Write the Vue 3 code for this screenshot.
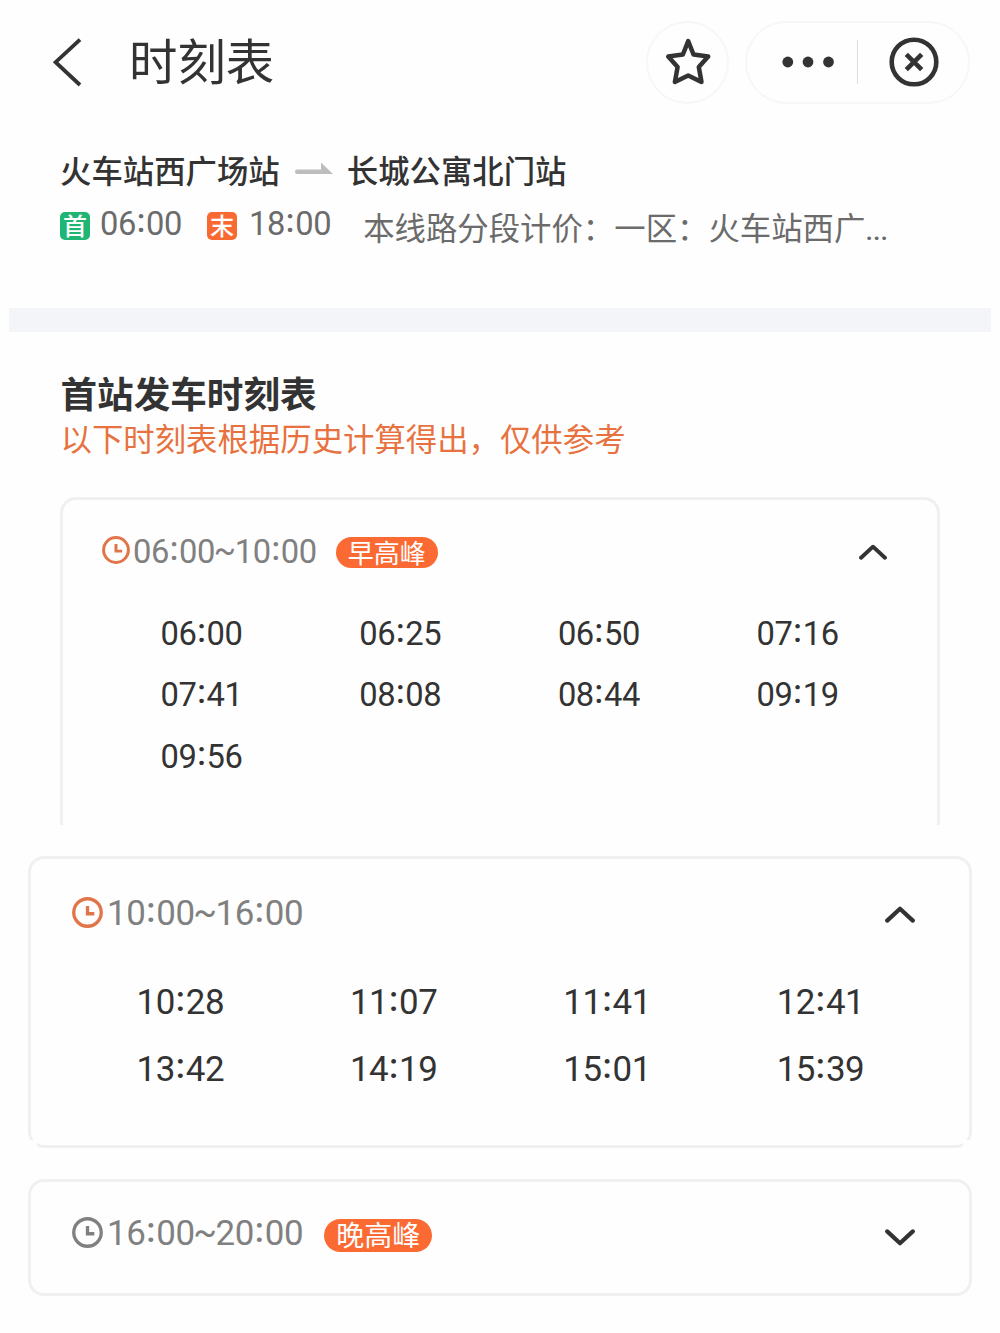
<script setup>
import { h } from 'vue'

const first = '06:00'
const last = '18:00'

const periods = [
  {
    range: '06:00~10:00',
    tag: '早高峰',
    variant: 'inset',
    open: true,
    times: ['06:00', '06:25', '06:50', '07:16', '07:41', '08:08', '08:44', '09:19', '09:56'],
  },
  {
    range: '10:00~16:00',
    tag: '',
    variant: 'wide',
    open: true,
    times: ['10:28', '11:07', '11:41', '12:41', '13:42', '14:19', '15:01', '15:39'],
  },
  { range: '16:00~20:00', tag: '晚高峰', variant: 'closed', open: false, times: [] },
]

// Splits a time string so that its separators can be centred on the digits.
const ClockText = (props) =>
  h(
    'span',
    { class: 'num' },
    props.value
      .split(/([:~])/)
      .map((part) =>
        part === ':' ? h('i', { class: 'colon' }, part) : part === '~' ? h('i', { class: 'tilde' }, part) : part
      )
  )
ClockText.props = ['value']
</script>

<template>
  <main class="page">
    <header class="bar">
      <svg class="back" width="34" height="50" viewBox="0 0 34 50">
        <path d="M30 2.6 5.6 25.2 30 48" />
      </svg>
      <h1>时刻表</h1>
      <div class="round">
        <svg width="50" height="50" viewBox="0 0 50 50">
          <path d="M25.2 4.2 30.5 17.5 45.2 19.6 35.8 30 38.5 45 25.2 38.5 11.9 45 14.6 30 5.2 19.6 19.9 17.5Z" />
        </svg>
      </div>
      <div class="capsule">
        <svg class="dots" width="54" height="12" viewBox="0 0 54 12">
          <circle cx="6.8" cy="6" r="5.4" />
          <circle cx="27" cy="6" r="5.4" />
          <circle cx="47.5" cy="6" r="5.4" />
        </svg>
        <span class="split"></span>
        <svg class="close" width="50" height="50" viewBox="0 0 50 50">
          <circle cx="25" cy="25" r="22.3" />
          <path d="m17.3 17.3 15.4 15.4M32.7 17.3 17.3 32.7" />
        </svg>
      </div>
    </header>

    <section class="route">
      <div class="stations">
        <span>火车站西广场站</span>
        <svg width="38" height="14" viewBox="0 0 38 14">
          <path d="M2 7.5H26V.5L38 12H2Q0 12 0 9.8T2 7.5Z" />
        </svg>
        <span>长城公寓北门站</span>
      </div>
      <div class="service">
        <b class="mark green">首</b>
        <ClockText :value="first" />
        <b class="mark orange">末</b>
        <ClockText :value="last" />
        <p>本线路分段计价：一区：火车站西广<span class="more">...</span></p>
      </div>
    </section>

    <div class="band"></div>

    <section class="heading">
      <h2>首站发车时刻表</h2>
      <p>以下时刻表根据历史计算得出，仅供参考</p>
    </section>

    <article v-for="p in periods" :key="p.range" class="card" :class="p.variant">
      <div class="head">
        <svg class="clock" viewBox="0 0 30 30">
          <circle cx="15" cy="15" r="13.3" />
          <path d="M15 8.6V16.2H21.6" />
        </svg>
        <ClockText :value="p.range" />
        <span v-if="p.tag" class="tag">{{ p.tag }}</span>
        <svg class="chevron" :class="{ down: !p.open }" viewBox="0 0 30 17">
          <path d="M2.2 14.6 15 2.8 27.8 14.6" />
        </svg>
      </div>
      <div v-if="p.open" class="times">
        <ClockText v-for="t in p.times" :key="t" :value="t" />
      </div>
    </article>
  </main>
</template>

<style>
body {
  background: #fefefe;
}
</style>

<style scoped>
.page {
  width: 1000px;
  height: 1333px;
  overflow: hidden;
  background: #fefefe;
  color: #333;
  font-family: 'Noto Sans CJK SC', sans-serif;
}
h1,
h2,
p {
  margin: 0;
  font-weight: 400;
  white-space: nowrap;
}
svg {
  display: block;
  flex: none;
  fill: none;
  stroke: #333;
}

.bar {
  display: flex;
  align-items: center;
  height: 125px;
  box-sizing: border-box;
  padding: 0 30px 2px 50px;
}
.back {
  stroke-width: 3.8;
}
h1 {
  margin: -6px auto 0 45px;
  font-size: 48.4px;
  line-height: 60px;
}
.round,
.capsule {
  box-sizing: border-box;
  height: 83px;
  border: 2px solid #f7f7f7;
  border-radius: 42px;
  display: flex;
  align-items: center;
}
.round {
  width: 83px;
  justify-content: center;
  margin-right: 16px;
}
.capsule,
.round {
  margin-top: 1px;
}
.round svg {
  stroke-width: 4.5;
  stroke-linejoin: round;
}
.capsule {
  width: 225px;
  padding-left: 34px;
}
.dots {
  fill: #333;
  stroke: none;
}
.split {
  width: 1px;
  height: 44px;
  margin: 0 31px 0 22px;
  background: #dcdcdc;
}
.close {
  margin-top: -1px;
  stroke-width: 4.6;
}

.route {
  height: 183px;
  box-sizing: border-box;
  padding: 24px 0 0 60px;
}
.stations {
  display: flex;
  align-items: center;
  height: 41px;
  font-size: 31.4px;
  line-height: 41px;
  font-weight: 500;
}
.stations svg {
  margin: -2px 14px 0 15px;
  fill: #bdbdbd;
  stroke: none;
}
.service {
  display: flex;
  height: 68px;
  align-items: center;
  color: #6b6b6b;
}
.service .num {
  margin: 0 0 1px 1px;
  font-size: 32.7px;
}
.mark {
  width: 30px;
  height: 28px;
  margin: 3px 9px 0 0;
  border-radius: 5px;
  color: #fff;
  font-size: 24px;
  line-height: 25px;
  font-weight: 500;
  text-align: center;
}
.green {
  background: #1fb574;
}
.orange {
  margin-left: 25px;
  margin-right: 11px;
  background: #f96a33;
}
.service p {
  margin: 9px 0 0 32px;
  font-size: 31.4px;
  line-height: 42px;
}
.more {
  font-family: Roboto, sans-serif;
  font-size: 27px;
  font-weight: 500;
}

.band {
  height: 24px;
  margin: 0 9px;
  background: #f4f5f9;
}

.heading {
  height: 165px;
  box-sizing: border-box;
  padding: 38px 0 0 60.5px;
}
h2 {
  font-size: 36.6px;
  line-height: 46px;
  font-weight: 700;
}
.heading p {
  margin-top: -1px;
  color: #e8723f;
  font-size: 31.4px;
  line-height: 46px;
}

.num {
  font-family: Roboto, sans-serif;
  line-height: 40px;
  letter-spacing: -0.012em;
  white-space: nowrap;
}
.num :deep(i) {
  display: inline-block;
  font-style: normal;
  letter-spacing: 0;
  line-height: 1;
  text-align: center;
}
.num :deep(.colon) {
  width: 0.31em;
  font-weight: 500;
  vertical-align: 0.085em;
}
.num :deep(.tilde) {
  width: 0.6em;
  text-indent: -0.04em;
  vertical-align: 0.03em;
}

.card {
  position: relative;
  box-sizing: border-box;
  margin: 0 28px 31px;
  border: 3px solid #f0f0f0;
  border-radius: 16px;
  font-size: 34.9px;
}
.inset {
  height: 328px;
  margin: 0 60px 31px;
  border-bottom: 0;
  border-radius: 16px 16px 0 0;
  font-size: 32.7px;
}
.wide {
  height: 292px;
}
.wide::before,
.wide::after {
  content: '';
  position: absolute;
  bottom: -3px;
  width: 9px;
  height: 8px;
  background: #fefefe;
}
.wide::before {
  left: -3px;
}
.wide::after {
  right: -3px;
}
.closed {
  height: 117px;
}

.head {
  display: flex;
  align-items: center;
  height: 110px;
  padding: 0 54px 0 41px;
  color: #808080;
}
.closed .head {
  height: 104px;
}
.inset .head {
  height: 103px;
  padding: 0 50px 0 39px;
}
.clock {
  width: 31px;
  height: 31px;
  margin: -3px 4px 0 0;
  stroke: #e2744a;
  stroke-width: 3.2;
}
.closed .clock {
  stroke: #808080;
}
.inset .clock {
  width: 28px;
  height: 28px;
  margin-right: 3px;
}
.tag {
  height: 33px;
  margin: 2px 0 0 21px;
  padding: 0 12px;
  border-radius: 17px;
  background: #fb6a32;
  color: #fff;
  font-size: 28px;
  line-height: 31px;
}
.inset .tag {
  height: 31px;
  margin-top: 1px;
  margin-left: 19px;
  font-size: 26px;
  line-height: 29px;
}
.chevron {
  width: 30px;
  height: 17px;
  margin: 0 0 0 auto;
  stroke-width: 4.2;
  stroke-linecap: round;
  stroke-linejoin: round;
}
.inset .chevron {
  width: 28px;
  height: 16px;
}
.down {
  transform: scaleY(-1);
  margin-top: 6px;
}

.times {
  display: grid;
  grid-template-columns: repeat(4, 213.4px);
  grid-auto-rows: 67.5px;
  align-items: center;
  padding: 0 0 0 105.5px;
}
.inset .times {
  grid-template-columns: repeat(4, 198.7px);
  grid-auto-rows: 61.5px;
  padding: 0 0 0 97.5px;
}
</style>
